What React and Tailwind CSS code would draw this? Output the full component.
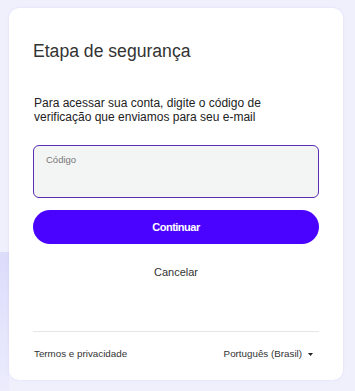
export default function App() {
  return (
    <div
      className="w-[355px] h-[391px] overflow-hidden bg-[#f0f0fd] flex"
      style={{ fontFamily: '"Liberation Sans", Arial, sans-serif' }}
    >
      <div className="w-[9px] shrink-0 flex flex-col">
        <div className="h-[252px]" />
        <div className="flex-1 bg-gradient-to-b from-[#dcdcfb] to-[#ececfd]" />
      </div>
      <div className="mt-[8px] w-[334px] h-[372px] bg-white rounded-[10px] shadow-[0_0_3px_rgba(120,120,200,0.15)] flex flex-col px-[24px]">
        <h1 className="mt-[32px] text-[17.6px] leading-[22px] text-[#333]">Etapa de segurança</h1>
        <p className="mt-[34px] text-[12px] leading-[14px] text-[#222] pl-[1px]">
          Para acessar sua conta, digite o código de verificação que enviamos para seu e-mail
        </p>
        <div className="mt-[21px] h-[53px] rounded-[6px] border border-[#5a2db3] bg-[#f3f4f4] px-[12px] pt-[8px]">
          <div className="text-[9.5px] leading-[12px] text-[#777]">Código</div>
        </div>
        <button className="mt-[12px] h-[34px] rounded-full bg-[#4a03ff] text-white text-[11px] font-bold tracking-[-0.5px]">
          Continuar
        </button>
        <div className="mt-[21px] text-center text-[11px] leading-[14px] text-[#333]">Cancelar</div>
        <div className="mt-[52px] h-px bg-[#e6e6e6]" />
        <div className="mt-[16px] flex items-center justify-between text-[9.8px] leading-[12px] text-[#333]">
          <span className="pl-[1px]">Termos e privacidade</span>
          <span className="flex items-center gap-[6px] pr-[6px]">
            Português (Brasil)
            <svg width="5" height="3" viewBox="0 0 5 3"><path d="M0 0h5L2.5 3z" fill="#222" /></svg>
          </span>
        </div>
      </div>
    </div>
  );
}
